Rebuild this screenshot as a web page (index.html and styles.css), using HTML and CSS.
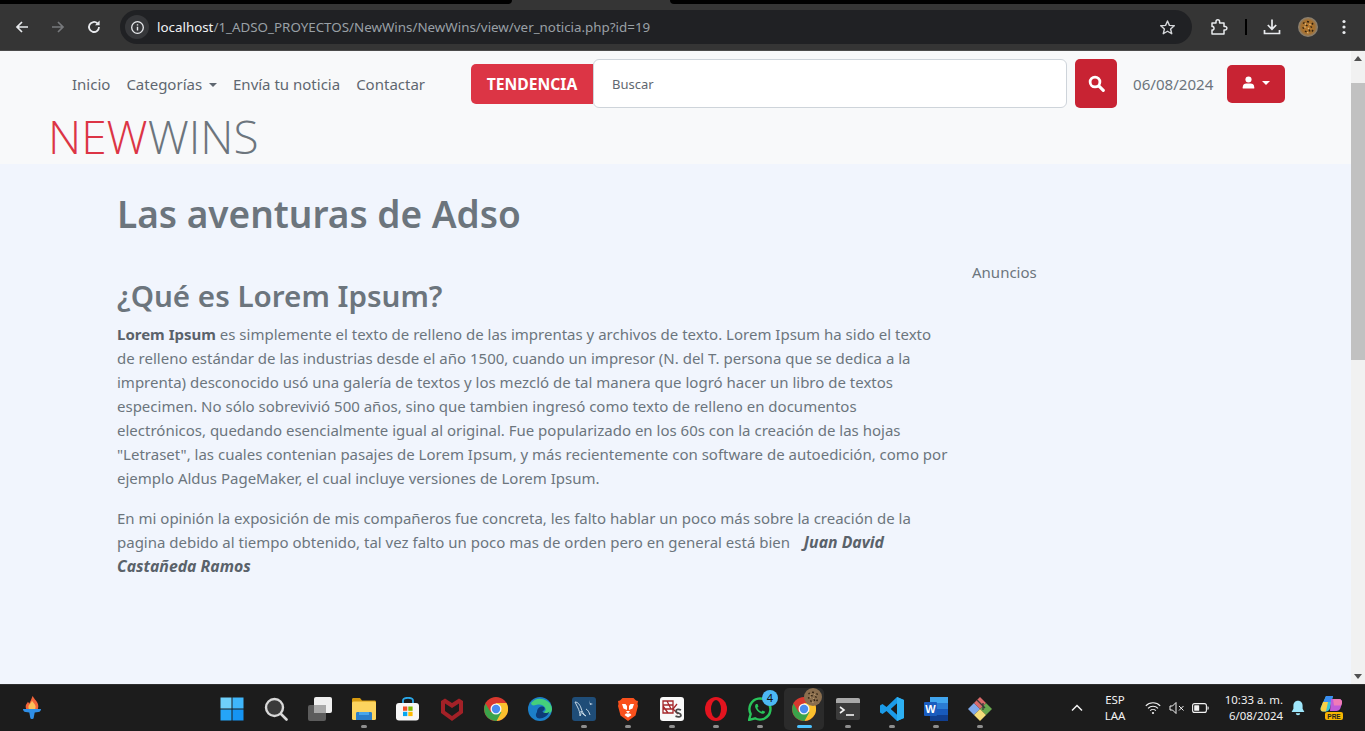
FILE: index.html
```html
<!DOCTYPE html>
<html lang="es">
<head>
<meta charset="utf-8">
<title>Las aventuras de Adso</title>
<link rel="stylesheet" href="styles.css">
</head>
<body>
<div class="chrome">
  <div class="strip"><div class="strip-left"></div><div class="strip-tab"></div><div class="strip-right"></div></div>
  <div class="toolbar">
    <svg class="tb-btn" viewBox="0 0 16 16"><path d="M14 8H3M8 3 3 8l5 5" fill="none" stroke="#e8eaed" stroke-width="1.7"/></svg>
    <svg class="tb-btn" viewBox="0 0 16 16"><path d="M2 8h11M8 3l5 5-5 5" fill="none" stroke="#77797c" stroke-width="1.7"/></svg>
    <svg class="tb-btn" viewBox="0 0 16 16"><path d="M13 8a5 5 0 1 1-1.5-3.6" fill="none" stroke="#e8eaed" stroke-width="1.8"/><path d="M13.6 1.6v4.6H9z" fill="#e8eaed"/></svg>
    <div class="omnibox">
      <span class="info"><svg viewBox="0 0 16 16" class="info-icon"><circle cx="8" cy="8" r="6.2" fill="none" stroke="#e8eaed" stroke-width="1.4"/><path d="M8 7.2v4M8 4.5v1.4" stroke="#e8eaed" stroke-width="1.5"/></svg></span>
      <span class="url"><span class="host">localhost</span>/1_ADSO_PROYECTOS/NewWins/NewWins/view/ver_noticia.php?id=19</span>
      <svg class="star" viewBox="0 0 16 16"><path d="M8 1.8 9.8 6l4.6.4-3.5 3 1.1 4.5L8 11.5l-4 2.4 1.1-4.5-3.5-3L6.200 6z" fill="none" stroke="#d5d7da" stroke-width="1.3" stroke-linejoin="round"/></svg>
    </div>
    <svg class="ext" viewBox="0 0 18 18"><path d="M2 5h4V3.600a1.800 1.800 0 0 1 3.600 0V5H14v3.500h1.200a1.700 1.700 0 0 1 0 3.400H14V16H2v-4h1a2 2 0 0 0 0-3.500H2z" fill="none" stroke="#e8eaed" stroke-width="1.500" stroke-linejoin="round"/></svg>
    <span class="tb-sep"></span>
    <svg class="dl" viewBox="0 0 18 18"><path d="M9 1.500v9.500M4.800 7 9 11.200 13.200 7M1.500 12v3.500h15V12" fill="none" stroke="#e8eaed" stroke-width="1.700"/></svg>
    <svg class="avatar" viewBox="0 0 20 20"><defs><radialGradient id="jag"><stop offset="0" stop-color="#b9782c"/><stop offset=".68" stop-color="#a5702f"/><stop offset="1" stop-color="#86827a"/></radialGradient></defs><circle cx="10" cy="10" r="10" fill="url(#jag)"/><path d="M5 6.500l1.500-1M9 4.500l2 .5M14 6l1 1.500M4.500 10.500l1.500 1M8 8l1.500 1M12.500 9.500l1.500 1M7 14l1.500 1M11 12.500l1 2M15 13l-1 1.500" stroke="#2f2111" stroke-width="1.500"/><path d="M7 6.500l1 1M11.500 7l1 1M6.500 9.500l1 1M10 11l1 1M9 15.500l1.500.5" stroke="#e2bd7c" stroke-width="1.100"/></svg>
    <svg class="menu" viewBox="0 0 4 16"><circle cx="2" cy="2.500" r="1.600" fill="#e8eaed"/><circle cx="2" cy="8" r="1.600" fill="#e8eaed"/><circle cx="2" cy="13.500" r="1.600" fill="#e8eaed"/></svg>
  </div>
</div>

<div class="viewport">
  <div class="page">
    <header class="site-header">
      <div class="nav-row">
        <nav class="nav">
          <a>Inicio</a>
          <a>Categorías <span class="caret"></span></a>
          <a>Envía tu noticia</a>
          <a>Contactar</a>
        </nav>
        <div class="trend">TENDENCIA</div>
        <div class="search-input">Buscar</div>
        <div class="search-btn"><svg viewBox="0 0 16 16" class="search-ico"><circle cx="6.600" cy="6.600" r="4.600" fill="none" stroke="#fff" stroke-width="2.600"/><path d="m10.400 10.400 4 4" stroke="#fff" stroke-width="2.900" stroke-linecap="round"/></svg></div>
        <div class="date">06/08/2024</div>
        <div class="user-btn"><svg viewBox="0 0 14 14" class="user-ico"><circle cx="7" cy="3.800" r="3.300" fill="#fff"/><path d="M.8 13.500v-1.500c0-2.600 2-3.800 3.700-3.800h5c1.700 0 3.700 1.200 3.700 3.800v1.500z" fill="#fff"/></svg><span class="caret caret-white"></span></div>
      </div>
      <div class="logo"><span class="logo-new">NEW</span><span class="logo-wins">WINS</span></div>
    </header>
    <main class="content">
      <h1>Las aventuras de Adso</h1>
      <div class="columns">
        <article class="article">
          <h2>¿Qué es Lorem Ipsum?</h2>
          <p><strong>Lorem Ipsum</strong> es simplemente el texto de relleno de las imprentas y archivos de texto. Lorem Ipsum ha sido el texto de relleno estándar de las industrias desde el año 1500, cuando un impresor (N. del T. persona que se dedica a la imprenta) desconocido usó una galería de textos y los mezcló de tal manera que logró hacer un libro de textos especimen. No sólo sobrevivió 500 años, sino que tambien ingresó como texto de relleno en documentos electrónicos, quedando esencialmente igual al original. Fue popularizado en los 60s con la creación de las hojas "Letraset", las cuales contenian pasajes de Lorem Ipsum, y más recientemente con software de autoedición, como por ejemplo Aldus PageMaker, el cual incluye versiones de Lorem Ipsum.</p>
          <p>En mi opinión la exposición de mis compañeros fue concreta, les falto hablar un poco más sobre la creación de la pagina debido al tiempo obtenido, tal vez falto un poco mas de orden pero en general está bien&nbsp; <strong class="signature">Juan David Castañeda Ramos</strong></p>
        </article>
        <aside class="aside">Anuncios</aside>
      </div>
    </main>
  </div>
  <div class="scrollbar">
    <span class="arrow-up"></span>
    <div class="thumb"></div>
    <span class="arrow-down"></span>
  </div>
</div>

<footer class="taskbar">
  <svg class="flame" viewBox="0 0 20 26"><path d="M11 0c1 3 6 6 6 11 0 1-.2 2-.5 3h-13c-.5-1-.5-2-.5-3 0-2 1.500-3 2.500-5 .5 1 1 1.500 1.500 2 1-2 2.500-5 3.500-8z" fill="#f2643a"/><path d="M10 5c1 2 4 4 4 6.500 0 1-.3 2-.5 2.500h-7c-.3-.5-.5-1.500-.5-2.500 0-2 3-3.500 4-6.500z" fill="#fbbf5a"/><path d="M0 14h20c0 1.500-1 3-3 3.500l-4 .5-1.200 6.500c-.3 1-3.300 1-3.600 0L7 18l-4-.5C1 17 0 15.500 0 14z" fill="#2f8fe8"/></svg>
  <div class="tasks">
    <div class="task">
      <svg class="ti" viewBox="0 0 24 24"><rect x="0.500" y="0.500" width="11" height="11" fill="#6fd0fb"/><rect x="12.500" y="0.500" width="11" height="11" fill="#3fb6fb"/><rect x="0.500" y="12.500" width="11" height="11" fill="#25a5f8"/><rect x="12.500" y="12.500" width="11" height="11" fill="#1594f2"/></svg>
    </div>
    <div class="task">
      <svg class="ti" viewBox="0 0 24 24"><circle cx="10.500" cy="10.500" r="8.500" fill="#3a3a3a" stroke="#d8d8d8" stroke-width="2.400"/><path d="m17 17 5.500 5.500" stroke="#d8d8d8" stroke-width="2.600" stroke-linecap="round"/></svg>
    </div>
    <div class="task">
      <svg class="ti" viewBox="0 0 24 24"><rect x="0" y="8" width="18" height="16" rx="2" fill="#5c5c5c"/><rect x="6" y="0" width="18" height="16" rx="2" fill="#efefef"/><rect x="6" y="8" width="12" height="8" fill="#a8a8a8"/></svg>
    </div>
    <div class="task running">
      <svg class="ti" viewBox="0 0 24 24"><path d="M0 2.500C0 1.500.5 1 1.500 1H8l2 2.500h12.500c1 0 1.500.5 1.500 1.500v3H0z" fill="#d69a10"/><rect y="4.500" width="24" height="18.500" rx="1.500" fill="#fcd45f"/><path d="M4 23v-6.500c0-1 .5-1.500 1.500-1.500h13c1 0 1.500.5 1.500 1.500V23z" fill="#2b7ec9"/><rect x="7" y="15" width="10" height="3" fill="#49a6ea"/></svg>
    </div>
    <div class="task">
      <svg class="ti" viewBox="0 0 24 24"><path d="M7 7V3.500C7 1.500 8.500 .8 12 .8s5 .7 5 2.700V7" fill="none" stroke="#29a7e8" stroke-width="1.800"/><rect y="6" width="23" height="17.500" rx="3" fill="#f7f7f7"/><rect x="7" y="9.500" width="4.300" height="4.300" fill="#f0502a"/><rect x="12.300" y="9.500" width="4.300" height="4.300" fill="#7fba00"/><rect x="7" y="14.800" width="4.300" height="4.300" fill="#05a6f0"/><rect x="12.300" y="14.800" width="4.300" height="4.300" fill="#ffb900"/></svg>
    </div>
    <div class="task">
      <svg class="ti" viewBox="0 0 24 24"><path d="M1 4 5 1.500 12 6l7-4.500L23 4v12l-11 8L1 16z" fill="#a32127"/><path d="M5 6.500V14l7 5 7-5V6.500L12 11z" fill="#1c1c1c"/></svg>
    </div>
    <div class="task">
      <svg class="ti" viewBox="0 0 24 24"><circle cx="12" cy="12" r="12" fill="#d8382e"/><path d="M12 6h10.500a12 12 0 0 1-10 18z" fill="#fbc02d"/><path d="M1.500 6.500A12 12 0 0 0 12.500 24l5-9H6.500z" fill="#3ba34a"/><circle cx="12" cy="12" r="5.500" fill="#f6f6f6"/><circle cx="12" cy="12" r="4.200" fill="#4a8cef"/></svg>
    </div>
    <div class="task">
      <svg class="ti" viewBox="0 0 24 24"><circle cx="12" cy="12" r="12" fill="#1c7fc8"/><path d="M3 6a12 12 0 0 1 21 6c0 3-2.500 5-5.500 5-2 0-3-1-3-2 2-.5 2.500-2 2-3.500C16 8 13 7 10 7.500 7 8 4 10 3 6z" fill="#45d07b"/><path d="M9 15c0-3 2-5.500 5-5.500 1 0 2 .5 2.500 1 .5 1.500 0 3-2 3.500 0 1 1 2 3 2 1.500 0 3-.5 4-1.500-1.500 4-5.500 7-10 7-3 0-5-3-2.500-6.500z" fill="#0d3c78"/></svg>
    </div>
    <div class="task running">
      <svg class="ti" viewBox="0 0 24 24"><rect width="24" height="24" rx="3" fill="#1f4d78"/><path d="M3 5c3 0 5 3 6 6s2 6 5 8c-3-1-4-3-5-5 0 2 0 4-1 5 0-3-1-6-2-8S4 7 3 5z" fill="none" stroke="#c3d6e4" stroke-width="1"/><path d="m17 3 1 3 3 1-3 1" fill="#c3d6e4"/><path d="M14 12c2 1 3 3 4 6" fill="none" stroke="#c3d6e4" stroke-width="1"/></svg>
    </div>
    <div class="task running">
      <svg class="ti" viewBox="0 0 24 24"><path d="M6.500 1h11L20 3.500l2 .5-.5 3L22 9l-2.500 9.500L12 24l-7.500-5.500L2 9l.5-2L2 4l2-.500z" fill="#f9501c"/><path d="M12 20.500 8.500 18l1.500-1.500h4l1.500 1.500zM6 7h3.500L11 9v4l-3.500-1.500zM18 7h-3.500L13 9v4l3.500-1.500z" fill="#fff"/><path d="M10 14h4l-2 2.500z" fill="#fff"/></svg>
    </div>
    <div class="task running">
      <svg class="ti" viewBox="0 0 24 24"><rect width="24" height="24" rx="3" fill="#f9f9f9"/><path d="M3 4h10v12H3zM3 8h10M3 12h10M7 4l4 8M3 9l5 7" fill="none" stroke="#a5272a" stroke-width="1.300"/><path d="M13 12l4-5M13 12l5 5" fill="none" stroke="#a5272a" stroke-width="1.300"/><path d="M21 13c-2-1-5-1-5 1.200 0 2.500 5 1.500 5 4 0 2-3 2-5.500 1" fill="none" stroke="#4a4a4a" stroke-width="1.800"/></svg>
    </div>
    <div class="task running">
      <svg class="ti" viewBox="0 0 24 24"><ellipse cx="12" cy="12" rx="11" ry="12" fill="#e3141f"/><ellipse cx="12" cy="12" rx="5" ry="9" fill="#1c1c1c"/></svg>
    </div>
    <div class="task running">
      <svg class="ti" viewBox="0 0 24 24"><path d="M1 23l1.700-6A10.500 10.500 0 1 1 7 21.300z" fill="none" stroke="#29c45a" stroke-width="2.400" stroke-linejoin="round"/><path d="M8 7c-1 1-1.500 2.500 0 5 1.500 2.500 3.500 4 6 4.800 1.500.3 3-.8 3.200-2l-2.600-1.300-1.200 1.200c-2-.8-3.300-2.200-4.100-4l1.200-1.100L9.500 7z" fill="#29c45a"/></svg>
      <span class="badge">4</span>
    </div>
    <div class="task active">
      <svg class="ti" viewBox="0 0 24 24"><circle cx="12" cy="12" r="12" fill="#d8382e"/><path d="M12 6h10.500a12 12 0 0 1-10 18z" fill="#fbc02d"/><path d="M1.500 6.500A12 12 0 0 0 12.500 24l5-9H6.500z" fill="#3ba34a"/><circle cx="12" cy="12" r="5.500" fill="#f6f6f6"/><circle cx="12" cy="12" r="4.200" fill="#4a8cef"/></svg>
      <svg class="task-avatar" viewBox="0 0 20 20"><circle cx="10" cy="10" r="10" fill="#8a6e4e"/><path d="M5 6.500l1.500-1M9 4.500l2 .5M14 6l1 1.500M4.500 10.500l1.500 1M8 8l1.500 1M12.500 9.500l1.500 1M7 14l1.500 1M11 12.500l1 2M15 13l-1 1.500" stroke="#2f2111" stroke-width="1.500"/><path d="M7 6.500l1 1M11.500 7l1 1M6.500 9.500l1 1M10 11l1 1M9 15.500l1.500.5" stroke="#c9a877" stroke-width="1.100"/></svg>
    </div>
    <div class="task running">
      <svg class="ti" viewBox="0 0 24 24"><rect y="1" width="24" height="22" rx="2" fill="#3b3b3b"/><path d="M0 3c0-1.200.8-2 2-2h20c1.200 0 2 .8 2 2v3H0z" fill="#a9a9a9"/><path d="m4 10 4 3-4 3" fill="none" stroke="#f4f4f4" stroke-width="1.600"/><path d="M10 18h8" stroke="#f4f4f4" stroke-width="1.600"/></svg>
    </div>
    <div class="task running">
      <svg class="ti" viewBox="0 0 24 24"><path d="M17 0 24 3v18l-7 3L6.500 14l-4 3-2.500-1.500V8.500L2.500 7l4 3zM17 6.500 11 12l6 5.500z" fill="#1b9be8"/><path d="M17 0 24 3v18l-7 3z" fill="#2db0f2"/><path d="M17 6.500 11 12l6 5.500z" fill="#1c1c1c"/></svg>
    </div>
    <div class="task running">
      <svg class="ti" viewBox="0 0 24 24"><rect x="6" y="0" width="18" height="24" rx="1.500" fill="#2b7cd3"/><rect x="6" y="0" width="18" height="6" fill="#41a5ee"/><rect x="6" y="12" width="18" height="6" fill="#185abd"/><rect x="6" y="18" width="18" height="6" fill="#103f91"/><rect x="0" y="5" width="13" height="14" rx="1" fill="#1a5cbf"/><text x="6.500" y="16" class="word-w">W</text></svg>
    </div>
    <div class="task running">
      <svg class="ti" viewBox="0 0 24 24"><path d="M12 12 6 6 0 12l6 6z" fill="#7ea8ea"/><path d="m12 12 6-6 6 6-6 6z" fill="#6aa84f"/><path d="M12 12 6 18l6 6 6-6z" fill="#f3dc7a"/><path d="m12 12-6-6 6-6 6 6z" fill="#d96a6a"/><path d="M9 3l8 8M15 6v7" stroke="#3a3a3a" stroke-width="1.300"/></svg>
    </div>
  </div>
  <div class="tray">
    <svg class="chev" viewBox="0 0 12 8"><path d="M1 6.500 6 1.500l5 5" fill="none" stroke="#f2f2f2" stroke-width="1.500"/></svg>
    <div class="lang"><span>ESP</span><span>LAA</span></div>
    <svg class="wifi" viewBox="0 0 16 14"><path d="M.8 4.800a10 10 0 0 1 14.400 0M3 7.300a7 7 0 0 1 10 0M5.200 9.600a4 4 0 0 1 5.600 0" fill="none" stroke="#f2f2f2" stroke-width="1.100"/><circle cx="8" cy="12" r="1.100" fill="#f2f2f2"/></svg>
    <svg class="vol" viewBox="0 0 16 14"><path d="M1 5h2.500L7 1.500v11L3.500 9H1z" fill="none" stroke="#f2f2f2" stroke-width="1"/><path d="m10 5 4.500 4.500M14.500 5 10 9.500" stroke="#f2f2f2" stroke-width="1"/></svg>
    <svg class="batt" viewBox="0 0 17 10"><rect x=".6" y=".6" width="13.800" height="8.800" rx="2" fill="none" stroke="#f2f2f2" stroke-width="1.100"/><rect x="2.200" y="2.200" width="5" height="5.600" rx=".6" fill="#f2f2f2"/><path d="M15.500 3.200c1 0 1.200.8 1.200 1.800s-.2 1.800-1.200 1.800z" fill="#f2f2f2"/></svg>
    <div class="clock"><span>10:33 a. m.</span><span>6/08/2024</span></div>
    <svg class="bell" viewBox="0 0 14 16"><path d="M7 .8c3 0 4.600 2.300 4.600 5v3l1.800 3.200H.6l1.800-3.200v-3C2.400 3.100 4 .8 7 .8z" fill="#9fe7fb"/><path d="M4.800 13.300h4.400a2.200 2 0 0 1-4.400 0z" fill="#9fe7fb"/></svg>
    <div class="copilot">
      <svg class="copilot-ico" viewBox="0 0 24 20"><path d="M6 1h7l-3 12c-.5 2-2 3.500-4 3.500H3c-2 0-3-2-2.300-4z" fill="#36c5d6"/><path d="M6 1h7L11 7H3.500z" fill="#3a8df2"/><path d="M1 12.500 3 7h5L6 16.500H3c-2 0-3-2-2-4z" fill="#f7d046"/><path d="M11 4h8c2 0 3.500 2 3 4l-1.500 5c-.5 2-2.500 3-4 3H10z" fill="#c05bd8"/><path d="M13 4h6c2 0 3.500 2 3 4l-.8 2.500H14z" fill="#f07bb8"/></svg>
      <svg class="pre" viewBox="0 0 18 8"><rect width="18" height="8" rx="2" fill="#f7b500"/><text x="9" y="6.600" class="pre-text">PRE</text></svg>
    </div>
  </div>
</footer>
</body>
</html>
```

FILE: styles.css
```css
* { box-sizing: border-box; }
html, body { margin: 0; height: 100%; }
body {
  width: 1365px;
  height: 731px;
  overflow: hidden;
  display: flex;
  flex-direction: column;
  font-family: "Noto Sans", "Open Sans", sans-serif;
  background: #1c1c1c;
}

/* browser chrome */
.chrome { flex: none; height: 51px; display: flex; flex-direction: column; background: #353535; }
.strip { height: 4px; display: flex; background: #353535; }
.strip-left { width: 512px; background: #000; border-radius: 0 0 6px 0; }
.strip-tab { width: 158px; }
.strip-right { flex: 1; background: #000; border-radius: 0 0 0 6px; }
.toolbar {
  flex: 1;
  display: flex;
  align-items: center;
  padding-left: 14px;
  border-bottom: 1px solid #4b4b4b;
}
.tb-btn { width: 16px; height: 16px; margin-right: 20px; flex: none; }
.tb-btn:nth-child(3) { margin-right: 18px; }
.omnibox {
  width: 1072px;
  height: 34px;
  margin-left: 0;
  flex: none;
  background: #202124;
  border-radius: 17px;
  display: flex;
  align-items: center;
  padding-left: 5px;
}
.info {
  width: 24px; height: 24px; border-radius: 50%;
  background: #36373a;
  display: flex; align-items: center; justify-content: center;
  flex: none;
}
.info-icon { width: 15px; height: 15px; }
.url { margin-left: 8px; font-size: 13.37px; color: #9aa0a6; flex: 1; white-space: nowrap; }
.host { color: #f1f3f4; }
.star { width: 17px; height: 17px; margin-right: 16px; flex: none; }
.ext { width: 18px; height: 18px; margin-left: 18px; flex: none; }
.tb-sep { width: 1.500px; height: 16px; background: #000; margin-left: 17px; flex: none; }
.dl { width: 18px; height: 18px; margin-left: 16px; flex: none; }
.avatar { width: 20px; height: 20px; margin-left: 17px; flex: none; }
.menu { width: 4px; height: 16px; margin-left: 24px; flex: none; }

/* page */
.viewport { flex: 1; min-height: 0; display: flex; }
.page { flex: 1; min-width: 0; background: #f1f5fd; color: #6c757d; }
.site-header { height: 113px; background: #f8f9fa; padding: 8px 0 0 51px; }
.nav-row { height: 49px; display: flex; align-items: center; font-size: 15px; }
.nav { display: flex; margin-left: 21px; width: 399px; gap: 16px; color: #5f6770; white-space: nowrap; }
.caret {
  display: inline-block;
  margin-left: 3px;
  vertical-align: 3px;
  border-top: 4.500px solid currentColor;
  border-left: 4.500px solid transparent;
  border-right: 4.500px solid transparent;
}
.trend {
  width: 122px; height: 40px;
  background: #dc3545;
  color: #fff;
  font-weight: 700;
  font-size: 15.7px;
  border-radius: 5px 0 0 5px;
  display: flex; align-items: center; justify-content: center;
}
.search-input {
  width: 474px; height: 49px;
  background: #fff;
  border: 1px solid #ced4da;
  border-radius: 6px;
  font-size: 13px;
  color: #5f6770;
  display: flex; align-items: center;
  padding-left: 18px;
}
.search-btn {
  width: 42px; height: 49px;
  margin-left: 8px;
  background: #c82333;
  border-radius: 5px;
  display: flex; align-items: center; justify-content: center;
}
.search-ico { width: 17px; height: 17px; }
.date { margin-left: 16px; width: 94px; white-space: nowrap; font-size: 15.1px; }
.user-btn {
  width: 58px; height: 38px;
  background: #c82333;
  border-radius: 5px;
  display: flex; align-items: center; justify-content: center;
  gap: 7px;
  padding-bottom: 2px;
  color: #fff;
}
.user-ico { width: 13px; height: 13px; }
.caret-white { margin: 0; vertical-align: 0; }
.logo {
  font-family: "Open Sans", sans-serif;
  font-weight: 300;
  font-size: 46px;
  letter-spacing: 0;
  line-height: 40px;
  margin: 8px 0 0 -3px;
  white-space: nowrap;
}
.logo-new { color: #dc3545; }
.logo-wins { color: #6c757d; }

.content { padding-left: 117px; }
h1 { margin: 0; padding-top: 24px; font-size: 37px; font-weight: 600; line-height: 52px; }
.columns { display: flex; margin-top: 20px; }
.article { width: 831px; }
h2 { margin: 0 0 4px; padding-top: 14px; font-size: 29.6px; font-weight: 600; line-height: 44px; }
.article p { margin: 0 0 16px; font-size: 15px; line-height: 24px; }
.article strong { color: #5a626a; }
.article .signature { font-size: 15.8px; font-style: italic; margin-left: 6px; }
.aside { margin-left: 24px; padding-top: 0; font-size: 15px; line-height: 24px; }

/* scrollbar */
.scrollbar { width: 14px; flex: none; background: #f1f1f1; display: flex; flex-direction: column; align-items: center; position: relative; }
.arrow-up { margin-top: 5px; border-bottom: 5px solid #505050; border-left: 4px solid transparent; border-right: 4px solid transparent; }
.thumb { width: 14px; height: 277px; background: #c1c1c1; margin-top: 22px; }
.arrow-down { margin-top: auto; margin-bottom: 5px; border-top: 5px solid #505050; border-left: 4px solid transparent; border-right: 4px solid transparent; }

/* taskbar */
.taskbar {
  flex: none;
  height: 47px;
  background: #1c1c1c;
  border-top: 1px solid #2e2e2e;
  display: flex;
  align-items: flex-start;
  position: relative;
}
.flame { width: 18px; height: 24px; margin: 11px 0 0 23px; flex: none; }
.tasks { display: flex; margin-left: 169px; flex: none; }
.task {
  width: 44px; height: 46px;
  position: relative;
  display: flex; align-items: flex-start; justify-content: center;
  padding-top: 12px;
}
.ti { width: 24px; height: 24px; }
.running::after, .active::after {
  content: "";
  position: absolute;
  left: 50%;
  bottom: 3px;
  width: 6px; height: 3px;
  margin-left: -3px;
  border-radius: 2px;
  background: #8e8e8e;
}
.active::before {
  content: "";
  position: absolute;
  left: 2px; right: 2px; top: 3px; bottom: 1px;
  background: #2b2b2b;
  border-radius: 5px;
}
.active .ti { position: relative; }
.active::after { width: 15px; margin-left: -7.500px; background: #4cc2ff; }
.task-avatar { position: absolute; width: 18px; height: 18px; left: 22px; top: 3px; }
.badge {
  position: absolute;
  left: 24px; top: 5px;
  width: 16px; height: 16px;
  border-radius: 50%;
  background: #4cb8f5;
  color: #111;
  font-size: 11px;
  line-height: 16px;
  text-align: center;
}
.word-w { font-family: "Liberation Sans", sans-serif; font-size: 11px; font-weight: 700; fill: #fff; text-anchor: middle; }
.pre-text { font-family: "Liberation Sans", sans-serif; font-size: 6.500px; font-weight: 700; fill: #222; text-anchor: middle; }

.tray { position: absolute; left: 1071px; top: 0; height: 46px; width: 294px; color: #f2f2f2; display: flex; align-items: center; }
.chev { width: 12px; height: 8px; flex: none; }
.lang { display: flex; flex-direction: column; align-items: center; margin-left: 12px; width: 40px; font-size: 11.5px; line-height: 16px; }
.wifi { width: 16px; height: 14px; margin-left: 10px; flex: none; }
.vol { width: 16px; height: 14px; margin-left: 8px; flex: none; }
.batt { width: 17px; height: 10px; margin-left: 7px; flex: none; }
.clock { display: flex; flex-direction: column; align-items: flex-end; width: 58px; margin-left: 16px; font-size: 11.4px; line-height: 16px; white-space: nowrap; }
.bell { width: 14px; height: 16px; margin-left: 8px; flex: none; }
.copilot { position: relative; width: 24px; height: 26px; margin-left: 15px; flex: none; }
.copilot-ico { width: 24px; height: 20px; display: block; }
.pre { position: absolute; left: 5px; top: 17px; width: 18px; height: 8px; }
```
